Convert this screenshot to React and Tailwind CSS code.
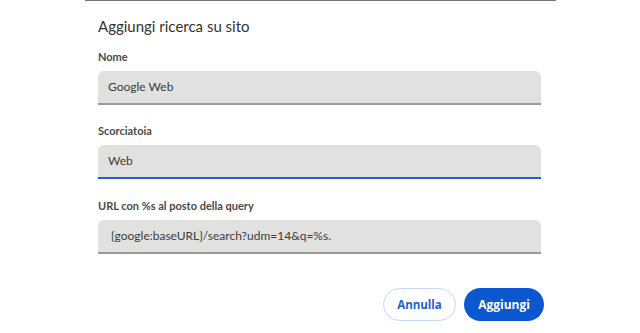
export default function App() {
  return (
    <div className="w-[640px] h-[333px] bg-white overflow-hidden" style={{ fontFamily: 'Lato, "Open Sans", sans-serif' }}>
      <div className="ml-[85px] w-[471px] h-px bg-[#777]" />
      <div className="ml-[98px] w-[443px]">
        <h1 className="mt-[15px] text-[15px] leading-[20px] text-[#333]">Aggiungi ricerca su sito</h1>

        <Field label="Nome" value="Google Web" className="mt-[14px]" />
        <Field label="Scorciatoia" value="Web" focused className="mt-[19px]" />
        <Field label="URL con %s al posto della query" value="{google:baseURL}/search?udm=14&q=%s." className="mt-[20px]" indent />

        <div className="flex justify-end gap-2 mt-[34px] -mr-[3px]" style={{ fontFamily: '"Open Sans", sans-serif' }}>
          <button className="h-[33px] w-[73px] rounded-full border border-[#c4d7f6] text-[11.5px] font-bold text-[#1f5fcf] bg-white">
            Annulla
          </button>
          <button className="h-[33px] w-[80px] rounded-full bg-[#0b57d0] text-[12px] font-bold text-white">
            Aggiungi
          </button>
        </div>
      </div>
    </div>
  )
}

function Field({ label, value, focused, indent, className }) {
  return (
    <div className={className}>
      <div className="text-[11px] leading-[14px] font-bold text-[#4a4a4a]">{label}</div>
      <div
        className={
          'mt-[7px] h-[34px] flex items-center rounded-t-[6px] bg-[#e1e2e0] text-[12px] text-[#3c3c3c] border-b-2 ' +
          (focused ? 'border-[#1a62d6]' : 'border-[#9a9a9a]') +
          (indent ? ' pl-[13px]' : ' pl-[10px]')
        }
      >
        {value}
      </div>
    </div>
  )
}
